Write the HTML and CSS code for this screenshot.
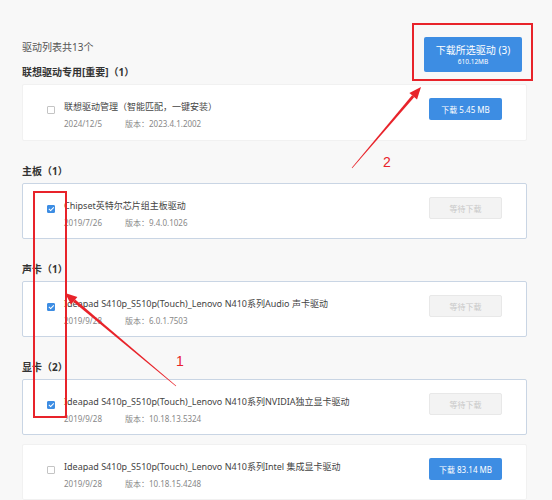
FILE: index.html
```html
<!DOCTYPE html>
<html lang="zh-CN">
<head>
<meta charset="utf-8">
<title>驱动列表</title>
<link rel="stylesheet" href="styles.css">
</head>
<body>
<div class="page">
  <div class="top">
    <div class="top-left">
      <div class="count">驱动列表共13个</div>
      <div class="group-title first">联想驱动专用[重要]（1）</div>
    </div>
    <button class="btn-main">
      <span class="btn-main-label">下载所选驱动 (3)</span>
      <span class="btn-main-size">610.12MB</span>
    </button>
  </div>

  <div class="card card-first">
    <span class="check"></span>
    <div class="info">
      <div class="name">联想驱动管理（智能匹配，一键安装）</div>
      <div class="meta"><span class="date">2024/12/5</span><span>版本：2023.4.1.2002</span></div>
    </div>
    <button class="btn btn-blue">下载 5.45 MB</button>
  </div>

  <div class="group">
    <div class="group-title">主板（1）</div>
    <div class="card selected">
      <span class="check checked"></span>
      <div class="info">
        <div class="name">Chipset英特尔芯片组主板驱动</div>
        <div class="meta"><span class="date">2019/7/26</span><span>版本：9.4.0.1026</span></div>
      </div>
      <button class="btn btn-wait">等待下载</button>
    </div>
  </div>

  <div class="group">
    <div class="group-title">声卡（1）</div>
    <div class="card selected">
      <span class="check checked"></span>
      <div class="info">
        <div class="name">Ideapad S410p_S510p(Touch)_Lenovo N410系列Audio 声卡驱动</div>
        <div class="meta"><span class="date">2019/9/28</span><span>版本：6.0.1.7503</span></div>
      </div>
      <button class="btn btn-wait">等待下载</button>
    </div>
  </div>

  <div class="group">
    <div class="group-title">显卡（2）</div>
    <div class="cards">
      <div class="card selected">
        <span class="check checked"></span>
        <div class="info">
          <div class="name">Ideapad S410p_S510p(Touch)_Lenovo N410系列NVIDIA独立显卡驱动</div>
          <div class="meta"><span class="date">2019/9/28</span><span>版本：10.18.13.5324</span></div>
        </div>
        <button class="btn btn-wait">等待下载</button>
      </div>
      <div class="card">
        <span class="check"></span>
        <div class="info">
          <div class="name">Ideapad S410p_S510p(Touch)_Lenovo N410系列Intel 集成显卡驱动</div>
          <div class="meta"><span class="date">2019/9/28</span><span>版本：10.18.15.4248</span></div>
        </div>
        <button class="btn btn-blue">下载 83.14 MB</button>
      </div>
    </div>
  </div>

  <svg class="marks" width="552" height="500" viewBox="0 0 552 500">
    <rect x="413" y="24" width="119" height="56" fill="none" stroke="#e8232a" stroke-width="2"/>
    <rect x="34" y="192" width="32" height="225" fill="none" stroke="#e8232a" stroke-width="2"/>
    <polygon fill="#e8232a" points="176.19,385.77 175.81,386.23 73.24,301.85 75.16,299.55"/>
    <polygon fill="#e8232a" points="65,293 77.4,296.9 71.0,304.5"/>
    <polygon fill="#e8232a" points="352.23,168.19 351.77,167.81 412.06,95.13 414.34,97.07"/>
    <polygon fill="#e8232a" points="421,87 417.0,99.4 409.4,92.9"/>
    <text x="180" y="366" class="mark-num">1</text>
    <text x="387" y="167" class="mark-num">2</text>
  </svg>
</div>
</body>
</html>
```

FILE: styles.css
```css
html, body {
  margin: 0;
  padding: 0;
  background: #f8f8f8;
}

body {
  font-family: "Noto Sans", "Noto Sans CJK SC", sans-serif;
  color: #444;
}

.page {
  position: relative;
  width: 552px;
  height: 500px;
  overflow: hidden;
  padding: 0 25px 0 22px;
  box-sizing: border-box;
}

.top {
  display: flex;
  justify-content: space-between;
  align-items: flex-start;
  padding-top: 37px;
  padding-right: 5px;
}

.count {
  font-size: 10px;
  line-height: 20px;
  color: #555;
}

.group-title {
  font-size: 10px;
  font-weight: bold;
  line-height: 20px;
  color: #333;
  margin-bottom: 2px;
}

.group-title.first {
  margin-top: 5px;
}

.btn-main {
  width: 98px;
  height: 35px;
  border: none;
  border-radius: 2px;
  background: #3d8de3;
  color: #fff;
  display: flex;
  flex-direction: column;
  align-items: center;
  justify-content: center;
  padding: 0;
  font-family: inherit;
}

.btn-main-label {
  font-size: 10px;
  line-height: 13px;
}

.btn-main-size {
  font-size: 6.5px;
  line-height: 9px;
}

.group {
  margin-top: 20px;
}

.cards {
  display: flex;
  flex-direction: column;
  gap: 9px;
}

.card {
  height: 56px;
  box-sizing: border-box;
  background: #fff;
  border: 1px solid #f1f1f1;
  border-radius: 2px;
  display: flex;
  align-items: flex-start;
  padding: 15px 24px 0 24px;
}

.card-first {
  height: 57px;
}

.card.selected {
  border-color: #c9d5e4;
}

.check {
  width: 8px;
  height: 8px;
  box-sizing: border-box;
  border: 1px solid #c4c4c4;
  border-radius: 1px;
  background: #fff;
  margin-top: 6px;
  margin-right: 9px;
  flex-shrink: 0;
  position: relative;
}

.check.checked {
  background: #3d8de3;
  border-color: #3d8de3;
}

.check.checked::after {
  content: "";
  position: absolute;
  left: 1.6px;
  top: 0.3px;
  width: 2px;
  height: 3.6px;
  border: solid #fff;
  border-width: 0 1px 1px 0;
  transform: rotate(45deg);
}

.info {
  flex: 1;
  min-width: 0;
}

.name {
  font-size: 9px;
  line-height: 14px;
  color: #444;
  white-space: nowrap;
}

.meta {
  margin-top: 4px;
  font-size: 8px;
  line-height: 12px;
  color: #888;
  display: flex;
}

.date {
  width: 61px;
}

.btn {
  width: 73px;
  height: 22px;
  margin-top: -2px;
  border-radius: 2px;
  font-family: inherit;
  font-size: 8px;
  padding: 0;
  flex-shrink: 0;
}

.btn-blue {
  background: #3d8de3;
  color: #fff;
  border: none;
}

.btn-wait {
  background: #f3f3f3;
  color: #c8c8c8;
  border: 1px solid #e8e8e8;
}

.marks {
  position: absolute;
  left: 0;
  top: 0;
  pointer-events: none;
}

.mark-num {
  font-family: "Liberation Sans", sans-serif;
  font-size: 14px;
  fill: #e8232a;
  text-anchor: middle;
}
```
